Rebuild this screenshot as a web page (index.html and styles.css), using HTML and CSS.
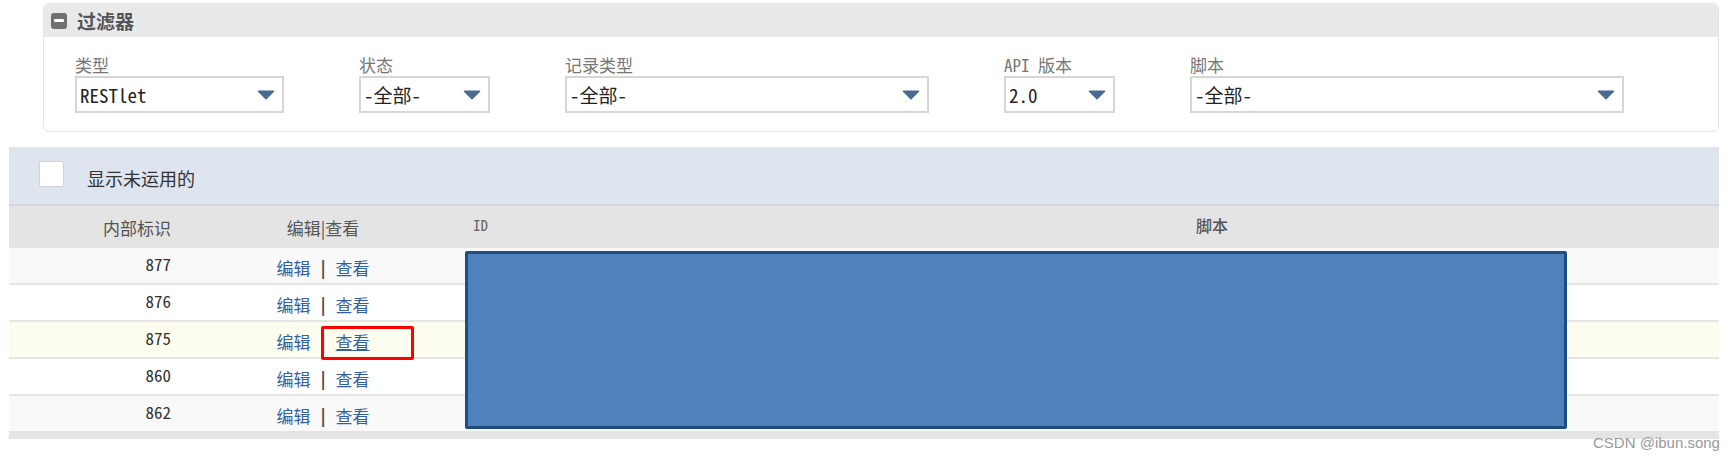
FILE: index.html
```html
<!DOCTYPE html>
<html lang="zh-CN">
<head>
<meta charset="utf-8">
<title>过滤器</title>
<link rel="stylesheet" href="styles.css">
</head>
<body>
<section class="panel">
  <div class="panel-head">
    <span class="collapse-icon"></span>
    <span class="panel-title">过滤器</span>
  </div>
  <div class="filters">
    <div class="field w-type">
      <div class="label">类型</div>
      <div class="select"><span class="value">RESTlet</span><svg class="caret" width="18" height="10" viewBox="0 0 18 10"><path d="M1.5 1.2 H16.5 L9 8.8 Z" fill="#4b6a93" stroke="#4b6a93" stroke-width="1.6" stroke-linejoin="round"/></svg></div>
    </div>
    <div class="field w-status">
      <div class="label">状态</div>
      <div class="select"><span class="value">-全部-</span><svg class="caret" width="18" height="10" viewBox="0 0 18 10"><path d="M1.5 1.2 H16.5 L9 8.8 Z" fill="#4b6a93" stroke="#4b6a93" stroke-width="1.6" stroke-linejoin="round"/></svg></div>
    </div>
    <div class="field w-record">
      <div class="label">记录类型</div>
      <div class="select"><span class="value">-全部-</span><svg class="caret" width="18" height="10" viewBox="0 0 18 10"><path d="M1.5 1.2 H16.5 L9 8.8 Z" fill="#4b6a93" stroke="#4b6a93" stroke-width="1.6" stroke-linejoin="round"/></svg></div>
    </div>
    <div class="field w-api">
      <div class="label">API 版本</div>
      <div class="select"><span class="value">2.0</span><svg class="caret" width="18" height="10" viewBox="0 0 18 10"><path d="M1.5 1.2 H16.5 L9 8.8 Z" fill="#4b6a93" stroke="#4b6a93" stroke-width="1.6" stroke-linejoin="round"/></svg></div>
    </div>
    <div class="field w-script">
      <div class="label">脚本</div>
      <div class="select"><span class="value">-全部-</span><svg class="caret" width="18" height="10" viewBox="0 0 18 10"><path d="M1.5 1.2 H16.5 L9 8.8 Z" fill="#4b6a93" stroke="#4b6a93" stroke-width="1.6" stroke-linejoin="round"/></svg></div>
    </div>
  </div>
</section>

<section class="list">
  <div class="toolbar">
    <span class="checkbox"></span>
    <span class="toolbar-text">显示未运用的</span>
  </div>
  <div class="row head">
    <div class="c-num">内部标识</div>
    <div class="c-ops">编辑|查看</div>
    <div class="c-id">ID</div>
    <div class="c-script">脚本</div>
  </div>
  <div class="row alt">
    <div class="c-num num">877</div>
    <div class="c-ops ops"><a class="link">编辑</a><span class="sep">|</span><a class="link">查看</a></div>
    <div></div><div></div>
  </div>
  <div class="row">
    <div class="c-num num">876</div>
    <div class="c-ops ops"><a class="link">编辑</a><span class="sep">|</span><a class="link">查看</a></div>
    <div></div><div></div>
  </div>
  <div class="row hover">
    <div class="c-num num">875</div>
    <div class="c-ops ops"><a class="link">编辑</a><span class="sep">|</span><a class="link under">查看</a></div>
    <div></div><div></div>
  </div>
  <div class="row">
    <div class="c-num num">860</div>
    <div class="c-ops ops"><a class="link">编辑</a><span class="sep">|</span><a class="link">查看</a></div>
    <div></div><div></div>
  </div>
  <div class="row alt last">
    <div class="c-num num">862</div>
    <div class="c-ops ops"><a class="link">编辑</a><span class="sep">|</span><a class="link">查看</a></div>
    <div></div><div></div>
  </div>
  <div class="footer-bar"></div>

  <div class="mask"></div>
  <div class="mark-box"></div>
  <div class="watermark">CSDN @ibun.song</div>
</section>
</body>
</html>
```

FILE: styles.css
```css
* { box-sizing: border-box; }

html, body { min-height: 459px; }

body {
  margin: 0;
  background: #fff;
  font-family: "Noto Sans CJK SC", "Liberation Sans", sans-serif;
  color: #333;
}

/* ---------- filter panel ---------- */
.panel {
  margin: 3px 0 0 43px;
  width: 1676px;
  height: 129px;
  border: 1px solid #e4e4e4;
  border-radius: 6px;
  overflow: hidden;
  background: #fff;
}

.panel-head {
  height: 33px;
  background: #e9e9e9;
  display: flex;
  align-items: center;
  gap: 10px;
  padding-left: 7px;
}

.collapse-icon {
  width: 16px;
  height: 16px;
  background: #707070;
  border-radius: 3px;
  display: flex;
  align-items: center;
  justify-content: center;
}
.collapse-icon::after {
  content: "";
  width: 10px;
  height: 3px;
  background: #fff;
  border-radius: 1px;
}

.panel-title {
  font-size: 19px;
  font-weight: 700;
  line-height: 1;
  color: #555;
}

.filters {
  display: flex;
  gap: 75px;
  padding: 18px 0 0 31px;
}

.w-type   { width: 209px; }
.w-status { width: 131px; }
.w-record { width: 364px; }
.w-api    { width: 111px; }
.w-script { width: 434px; }

.label {
  height: 20px;
  margin-bottom: 1px;
  font-family: "Noto Sans Mono CJK SC", "Noto Sans CJK SC", sans-serif;
  font-weight: 300;
  font-size: 17px;
  line-height: 20px;
  color: #777;
  white-space: nowrap;
}

.select {
  height: 37px;
  border: 2px solid #d6d6d6;
  background: #fff;
  display: flex;
  align-items: center;
  justify-content: space-between;
  padding: 0 7px 0 3px;
}

.value {
  font-family: "Noto Sans Mono CJK SC", "Liberation Mono", "Noto Sans CJK SC", monospace;
  font-size: 19px;
  line-height: 1;
  color: #222;
  white-space: nowrap;
}

.caret { display: block; flex: none; }

/* ---------- list ---------- */
.list {
  position: relative;
  margin: 15px 0 0 9px;
  width: 1710px;
}

.toolbar {
  height: 59px;
  background: #dfe5ef;
  border-bottom: 2px solid #d2d8e1;
  display: flex;
  align-items: flex-start;
  padding: 14px 0 0 30px;
}

.checkbox {
  width: 25px;
  height: 26px;
  background: #fff;
  border: 1px solid #cfd2d7;
  border-radius: 2px;
}

.toolbar-text {
  margin: 6px 0 0 23px;
  font-size: 18px;
  line-height: 22px;
  color: #333;
}

.row {
  display: grid;
  grid-template-columns: 174px 280px 730px 1fr;
  align-items: center;
  height: 37px;
  border-bottom: 2px solid #e5e5e5;
  background: #fff;
}
.row.alt   { background: #f9f9f9; }
.row.hover { background: #fdfdef; }
.row.last  { border-bottom: none; height: 35px; }

.row.head {
  height: 42px;
  background: #e4e4e4;
  border-bottom: none;
  font-size: 17px;
  color: #555;
}

.c-num {
  text-align: right;
  padding-right: 12px;
}
.c-ops {
  text-align: center;
  white-space: nowrap;
}
.c-id {
  padding-left: 10px;
  font-family: "Noto Sans Mono CJK SC", "Liberation Mono", monospace;
  font-size: 15px;
  color: #666;
  align-self: start;
  padding-top: 8px;
}
.c-script {
  padding-left: 3px;
  font-size: 16px;
  font-weight: 500;
  color: #555;
  align-self: start;
  padding-top: 7px;
}

.num {
  font-family: "Noto Sans Mono CJK SC", "Liberation Mono", monospace;
  font-size: 17px;
  color: #333;
  margin-top: -4px;
}

.ops {
  font-size: 17px;
  line-height: 22px;
  padding-top: 5px;
}

.link {
  color: #355f9f;
  text-decoration: none;
}
.link.under { text-decoration: underline; }

.sep {
  margin: 0 10px;
  color: #444;
  font-family: "Liberation Sans", sans-serif;
  font-size: 20px;
  line-height: 20px;
}

.footer-bar {
  height: 8px;
  background: #e4e4e4;
}

/* ---------- overlays ---------- */
.mask {
  position: absolute;
  left: 456px;
  top: 104px;
  width: 1102px;
  height: 178px;
  background: #4f81bd;
  border: 3px solid #1f4b7e;
  border-radius: 2px;
}

.mark-box {
  position: absolute;
  left: 312px;
  top: 179px;
  width: 93px;
  height: 34px;
  border: 3px solid #ff0000;
  border-radius: 2px;
}

.watermark {
  position: absolute;
  left: 1584px;
  top: 287px;
  font-family: "Liberation Sans", sans-serif;
  font-size: 15px;
  line-height: 18px;
  color: #999;
  text-shadow: 0 0 1px #fff;
  white-space: nowrap;
}
```
